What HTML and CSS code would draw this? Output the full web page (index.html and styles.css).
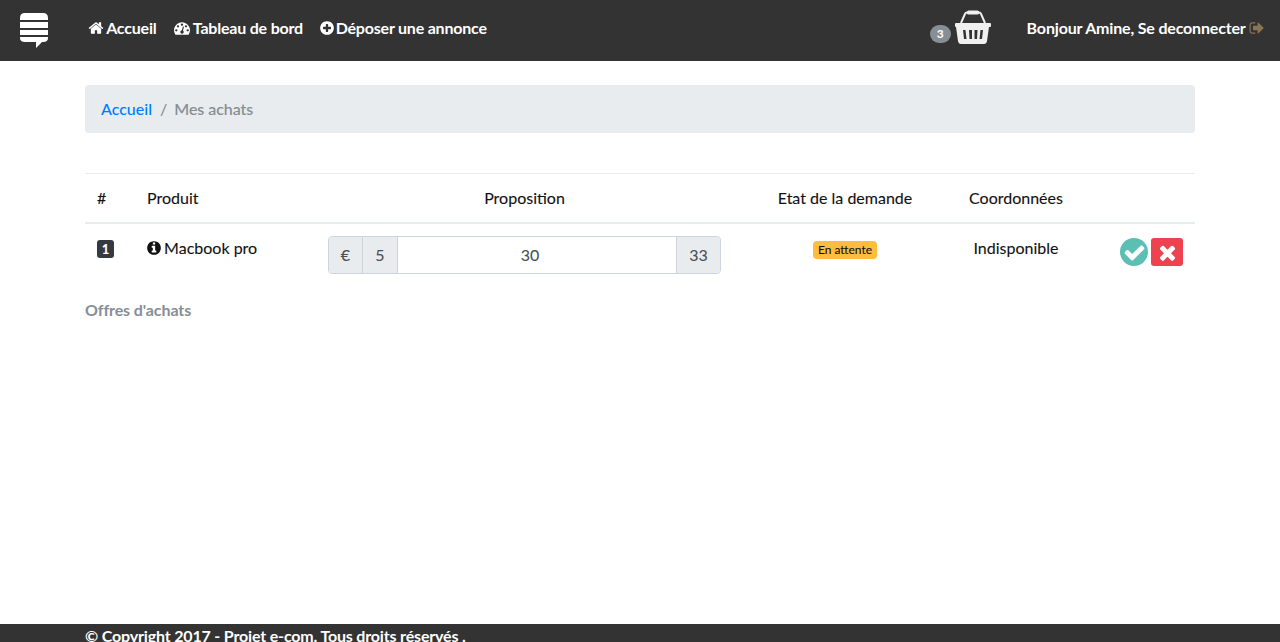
FILE: index.html
```html
<!DOCTYPE html>
<html lang="fr">
<head>
    <meta charset="UTF-8">
    <title>Mes achats</title>
    <link rel="stylesheet" href="styles.css">
</head>
<body>
    <header class="topbar">
        <svg class="logo" viewBox="0 0 28 35">
            <path fill="#fff" d="M0 5q0-5 5-5h18q5 0 5 5v2H0zM0 9h28v6H0zM0 17h28v5H0zM0 24h28v1q0 4-5 4h-1l-6 6v-6H5q-5 0-5-4z"/>
        </svg>
        <nav class="menu">
            <a href="#"><svg class="fa" viewBox="0 0 1792 1792"><path d="M1472 992v480q0 26-19 45t-45 19h-384v-384h-256v384h-384q-26 0-45-19t-19-45v-480q0-1 .5-3t.5-3l575-474 575 474q1 2 1 6zm223-69l-62 74q-8 9-21 11h-3q-13 0-21-7l-692-577-692 577q-12 8-24 7-13-2-21-11l-62-74q-8-10-7-23.5t11-21.5l719-599q32-26 76-26t76 26l244 204v-195q0-14 9-23t23-9h192q14 0 23 9t9 23v408l219 182q10 8 11 21.5t-7 23.5z"/></svg> Accueil</a>
            <a href="#"><svg class="fa" viewBox="0 0 1792 1792"><path d="M384 1152q0-53-37.5-90.5t-90.5-37.5-90.5 37.5-37.5 90.5 37.5 90.5 90.5 37.5 90.5-37.5 37.5-90.5zm192-448q0-53-37.5-90.5t-90.5-37.5-90.5 37.5-37.5 90.5 37.5 90.5 90.5 37.5 90.5-37.5 37.5-90.5zm428 481l101-382q6-26-7.5-48.5t-38.5-29.5-48 6.5-30 39.5l-101 382q-60 5-107 43.5t-63 98.5q-20 77 20 146t117 89 146-20 89-117q16-60-6-117t-72-91zm660-33q0-53-37.5-90.5t-90.5-37.5-90.5 37.5-37.5 90.5 37.5 90.5 90.5 37.5 90.5-37.5 37.5-90.5zm-640-640q0-53-37.5-90.5t-90.5-37.5-90.5 37.5-37.5 90.5 37.5 90.5 90.5 37.5 90.5-37.5 37.5-90.5zm448 192q0-53-37.5-90.5t-90.5-37.5-90.5 37.5-37.5 90.5 37.5 90.5 90.5 37.5 90.5-37.5 37.5-90.5zm320 448q0 261-141 483-19 29-54 29h-1402q-35 0-54-29-141-221-141-483 0-182 71-348t191-286 286-191 348-71 348 71 286 191 191 286 71 348z"/></svg> Tableau de bord</a>
            <a href="#"><svg class="fa" viewBox="0 0 1792 1792"><path d="M1344 960v-128q0-26-19-45t-45-19h-256v-256q0-26-19-45t-45-19h-128q-26 0-45 19t-19 45v256h-256q-26 0-45 19t-19 45v128q0 26 19 45t45 19h256v256q0 26 19 45t45 19h128q26 0 45-19t19-45v-256h256q26 0 45-19t19-45zm320-64q0 209-103 385.5t-279.5 279.5-385.5 103-385.5-103-279.5-279.5-103-385.5 103-385.5 279.5-279.5 385.5-103 385.5 103 279.5 279.5 103 385.5z"/></svg> Déposer une annonce</a>
        </nav>
        <div class="cart">
            <span class="cart-count">3</span>
            <svg class="basket" viewBox="0 0 36 34">
                <path fill="none" stroke="#f0f0f0" stroke-width="2" d="M6 13 10 4q.5-1.500 2-1.500h12q1.500 0 2 1.500l4 9"/>
                <rect x="12" y="0.500" width="12" height="4" rx="1.500" fill="#f0f0f0"/>
                <path fill="#f0f0f0" fill-rule="evenodd" d="M1 13h34q1 0 1 1v2q0 1-1 1h-1l-2 14q-.5 3-3 3H6q-2.500 0-3-3L1 17q-1 0-1-1v-2q0-1 1-1zM8 20l1 9h2.500l-1-9zM14 20l.5 9H17v-9zM19.500 20v9H22l.5-9zM25.500 20l-1 9H27l1-9z"/>
            </svg>
        </div>
        <a class="account" href="#">Bonjour Amine, Se deconnecter <svg class="fa logout" viewBox="0 0 1792 1792"><path d="M704 1440q0 4 1 20t.5 26.5-3 23.5-10 19.500-20.500 6.500h-320q-119 0-203.500-84.500t-84.500-203.500v-704q0-119 84.500-203.500t203.500-84.500h320q13 0 22.500 9.500t9.500 22.500q0 4 1 20t.5 26.500-3 23.500-10 19.500-20.500 6.500h-320q-66 0-113 47t-47 113v704q0 66 47 113t113 47h312l11.500 1 11.500 3 8 5.500 7 9 2 13.500zm928-544q0 26-19 45l-544 544q-19 19-45 19t-45-19-19-45v-288h-448q-26 0-45-19t-19-45v-384q0-26 19-45t45-19h448v-288q0-26 19-45t45-19 45 19l544 544q19 19 19 45z"/></svg></a>
    </header>

    <main class="content">
        <ol class="breadcrumb">
            <li><a href="#">Accueil</a></li>
            <li class="sep">/</li>
            <li class="current">Mes achats</li>
        </ol>

        <table class="offers">
            <colgroup>
                <col class="col-num">
                <col class="col-product">
                <col class="col-price">
                <col class="col-state">
                <col class="col-contact">
                <col class="col-actions">
            </colgroup>
            <thead>
                <tr>
                    <th>#</th>
                    <th>Produit</th>
                    <th class="center">Proposition</th>
                    <th class="center">Etat de la demande</th>
                    <th class="center">Coordonnées</th>
                    <th></th>
                </tr>
            </thead>
            <tbody>
                <tr>
                    <td><span class="num">1</span></td>
                    <td><svg class="fa info" viewBox="0 0 1792 1792"><path d="M1152 1376v-160q0-14-9-23t-23-9h-96v-512q0-14-9-23t-23-9h-320q-14 0-23 9t-9 23v160q0 14 9 23t23 9h96v320h-96q-14 0-23 9t-9 23v160q0 14 9 23t23 9h448q14 0 23-9t9-23zm-128-896v-160q0-14-9-23t-23-9h-192q-14 0-23 9t-9 23v160q0 14 9 23t23 9h192q14 0 23-9t9-23zm640 416q0 209-103 385.500t-279.500 279.500-385.500 103-385.500-103-279.500-279.500-103-385.500 103-385.500 279.500-279.500 385.500-103 385.500 103 279.500 279.500 103 385.500z"/></svg> Macbook pro</td>
                    <td>
                        <div class="price-group">
                            <span class="addon euro">€</span>
                            <span class="addon five">5</span>
                            <span class="price-value">30</span>
                            <span class="addon last">33</span>
                        </div>
                    </td>
                    <td class="center"><span class="badge">En attente</span></td>
                    <td class="center">Indisponible</td>
                    <td>
                        <div class="actions">
                            <a class="btn-ok" href="#"><svg viewBox="0 0 1792 1792"><path d="M1671 566q0 40-28 68l-724 724-136 136q-28 28-68 28t-68-28l-136-136-362-362q-28-28-28-68t28-68l136-136q28-28 68-28t68 28l294 295 656-657q28-28 68-28t68 28l136 136q28 28 28 68z"/></svg></a>
                            <a class="btn-no" href="#"><svg viewBox="0 0 1792 1792"><path d="M1490 1322q0 40-28 68l-136 136q-28 28-68 28t-68-28l-294-294-294 294q-28 28-68 28t-68-28l-136-136q-28-28-28-68t28-68l294-294-294-294q-28-28-28-68t28-68l136-136q28-28 68-28t68 28l294 294 294-294q28-28 68-28t68 28l136 136q28 28 28 68t-28 68l-294 294 294 294q28 28 28 68z"/></svg></a>
                        </div>
                    </td>
                </tr>
            </tbody>
        </table>

        <p class="section-title">Offres d'achats</p>
    </main>

    <footer class="bottom">© Copyright 2017 - Projet e-com. Tous droits réservés .</footer>
</body>
</html>
```
FILE: styles.css
```css
html, body {
    height: 100%;
}
body {
    margin: 0;
    height: 100vh;
    overflow: hidden;
    display: flex;
    flex-direction: column;
    font-family: 'Lato', sans-serif;
    font-size: 16px;
    line-height: 24px;
    color: #212529;
    background: #fff;
}
a {
    text-decoration: none;
}
.fa {
    width: 16px;
    height: 16px;
    fill: currentColor;
    vertical-align: -2px;
}

/* barre du haut */
.topbar {
    height: 61px;
    flex: none;
    display: flex;
    align-items: center;
    padding: 0 15px 4px 20px;
    box-sizing: border-box;
    background: #333;
}
.topbar > a, .menu {
    margin-bottom: 1px;
}
.logo {
    width: 28px;
    height: 35px;
    margin-top: 3px;
}
.menu {
    display: flex;
    gap: 16px;
    margin-left: 40px;
}
.menu a, .account {
    color: #fff;
    font-weight: 700;
    letter-spacing: -0.2px;
}
.menu a:first-child {
    margin-right: 1px;
}
.menu a:first-child .fa {
    margin-right: -1px;
}
.menu a:last-child .fa {
    margin-right: -3px;
}
.account {
    margin-left: 36px;
    letter-spacing: -0.17px;
}
.cart {
    margin-left: auto;
    margin-bottom: 3px;
    display: flex;
    align-items: flex-end;
    gap: 4px;
}
.cart-count {
    width: 21px;
    height: 18px;
    margin-bottom: 1px;
    border-radius: 9px;
    background: #868e96;
    color: #fff;
    font-size: 12px;
    font-weight: 700;
    line-height: 18px;
    text-align: center;
}
.basket {
    width: 36px;
    height: 34px;
}
.logout {
    color: #8b7355;
}

/* contenu */
.content {
    flex: 1;
    padding: 24px 85px 0;
}
.breadcrumb {
    display: flex;
    gap: 8px;
    height: 48px;
    margin: 0 0 40px;
    padding: 12px 16px;
    box-sizing: border-box;
    list-style: none;
    border-radius: 4px;
    background: #e9ecef;
    font-weight: 500;
}
.breadcrumb a {
    color: #007bff;
}
.sep, .current {
    color: #868e96;
}
.current {
    margin-left: -1px;
    letter-spacing: -0.05px;
    -webkit-text-stroke: 0.1px;
}
.offers {
    width: 1110px;
    table-layout: fixed;
    border-collapse: collapse;
    color: #111;
    -webkit-text-stroke: 0.1px;
}
.col-num { width: 50px; }
.col-product { width: 181px; }
.col-price { width: 417px; }
.col-state { width: 224px; }
.col-contact { width: 118px; }
.col-actions { width: 120px; }
.offers th, .offers td {
    padding: 12px;
    text-align: left;
    vertical-align: top;
    font-weight: 400;
}
.offers th {
    border-top: 1px solid #e9ecef;
    border-bottom: 2px solid #e9ecef;
}
.offers .center {
    text-align: center;
}
.num {
    display: inline-block;
    width: 17px;
    height: 18px;
    border-radius: 3px;
    background: #343a40;
    color: #fff;
    font-size: 13px;
    font-weight: 700;
    line-height: 18px;
    text-align: center;
}
.info {
    margin-left: -1px;
    margin-right: -2px;
}
.price-group {
    display: flex;
    height: 38px;
    box-sizing: border-box;
    border: 1px solid #ced4da;
    border-radius: 4px;
    color: #495057;
    line-height: 36px;
    text-align: center;
}
.addon {
    background: #e9ecef;
}
.euro {
    width: 33px;
    border-right: 1px solid #ced4da;
    border-radius: 3px 0 0 3px;
}
.five {
    width: 34px;
    border-right: 1px solid #ced4da;
}
.price-value {
    flex: 1;
    padding-right: 14px;
    background: #fff;
}
.last {
    width: 43px;
    border-left: 1px solid #ced4da;
    border-radius: 0 3px 3px 0;
}
.badge {
    display: inline-block;
    height: 18px;
    padding: 0 5px;
    border-radius: 4px;
    background: #ffbc3d;
    font-size: 12px;
    line-height: 18px;
    vertical-align: top;
    margin-top: 5px;
}
.actions {
    display: flex;
    justify-content: flex-end;
    gap: 3px;
    margin-top: 2px;
}
.btn-ok, .btn-no {
    height: 28px;
    display: flex;
    align-items: center;
    justify-content: center;
    fill: #fff;
}
.btn-ok {
    width: 28px;
    border-radius: 50%;
    background: #5cbfb4;
}
.btn-no {
    width: 32px;
    border-radius: 3px;
    background: #ee4250;
}
.btn-ok svg {
    width: 23px;
    height: 23px;
}
.btn-no svg {
    width: 23px;
    height: 23px;
}
.section-title {
    margin: 12px 0 0;
    color: #868e96;
    font-weight: 700;
    letter-spacing: -0.1px;
}

/* pied de page */
.bottom {
    flex: none;
    height: 18px;
    box-sizing: border-box;
    padding: 0 85px;
    overflow: hidden;
    background: #333;
    color: #fff;
    font-weight: 700;
    letter-spacing: -0.17px;
}
```
